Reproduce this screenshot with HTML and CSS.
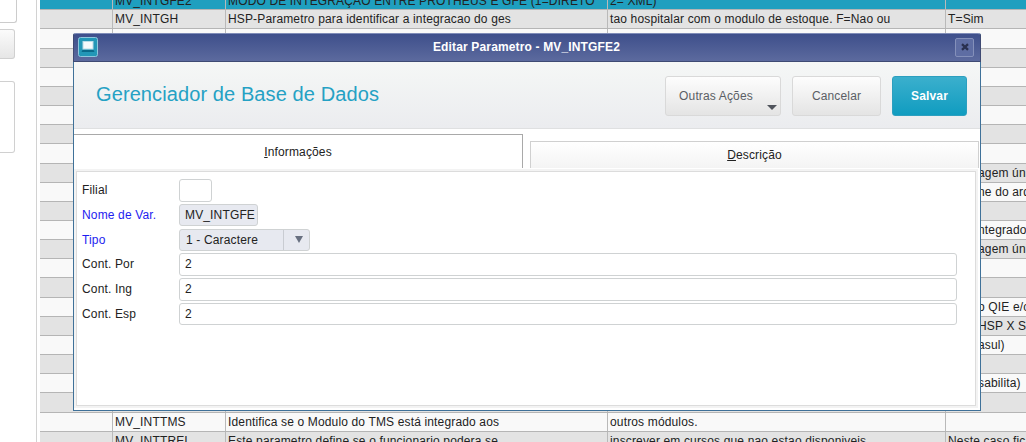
FILE: index.html
```html
<!DOCTYPE html>
<html lang="pt-BR">
<head>
  <meta charset="UTF-8">
  <title>Editar Parametro - MV_INTGFE2</title>
  <link rel="stylesheet" href="styles.css">
</head>
<body>
  <div class="page">
    <aside class="sidebar">
      <div class="side-field"></div>
      <div class="side-button"></div>
      <div class="side-box"></div>
    </aside>

    <div class="lista">
      <div class="row selected"><span></span><span>MV_INTGFE2</span><span>MODO DE INTEGRAÇÃO ENTRE PROTHEUS E GFE (1=DIRETO</span><span>2= XML)</span><span></span></div>
      <div class="row"><span></span><span>MV_INTGH</span><span>HSP-Parametro para identificar a integracao do ges</span><span>tao hospitalar com o modulo de estoque. F=Nao ou</span><span>T=Sim</span></div>
      <div class="row"><span></span><span></span><span></span><span></span><span></span></div>
      <div class="row"><span></span><span></span><span></span><span></span><span></span></div>
      <div class="row"><span></span><span></span><span></span><span></span><span></span></div>
      <div class="row"><span></span><span></span><span></span><span></span><span></span></div>
      <div class="row"><span></span><span></span><span></span><span></span><span></span></div>
      <div class="row"><span></span><span></span><span></span><span></span><span></span></div>
      <div class="row"><span></span><span></span><span></span><span></span><span></span></div>
      <div class="row"><span></span><span></span><span></span><span></span><span class="rest">agem única</span></div>
      <div class="row"><span></span><span></span><span></span><span></span><span class="rest">ne do arquivo</span></div>
      <div class="row"><span></span><span></span><span></span><span></span><span></span></div>
      <div class="row"><span></span><span></span><span></span><span></span><span class="rest">ntegrado</span></div>
      <div class="row"><span></span><span></span><span></span><span></span><span class="rest">agem única</span></div>
      <div class="row"><span></span><span></span><span></span><span></span><span></span></div>
      <div class="row"><span></span><span></span><span></span><span></span><span></span></div>
      <div class="row"><span></span><span></span><span></span><span></span><span class="rest">o QIE e/ou</span></div>
      <div class="row"><span></span><span></span><span></span><span></span><span class="rest">HSP X SI</span></div>
      <div class="row"><span></span><span></span><span></span><span></span><span class="rest">asul)</span></div>
      <div class="row"><span></span><span></span><span></span><span></span><span></span></div>
      <div class="row"><span></span><span></span><span></span><span></span><span class="rest">sabilita)</span></div>
      <div class="row"><span></span><span></span><span></span><span></span><span></span></div>
      <div class="row"><span></span><span>MV_INTTMS</span><span>Identifica se o Modulo do TMS está integrado aos</span><span>outros módulos.</span><span></span></div>
      <div class="row"><span></span><span>MV_INTTREI</span><span>Este parametro define se o funcionario podera se</span><span>inscrever em cursos que nao estao disponiveis.</span><span>Neste caso fica</span></div>
    </div>
  </div>

  <div class="dialog">
    <div class="titlebar">
      <svg class="app-icon" width="20" height="20" viewBox="0 0 20 20">
        <rect x="0.5" y="0.5" width="19" height="19" rx="2" fill="#2397b7" stroke="#8fc6dc"/>
        <rect x="5" y="4.5" width="10" height="7.5" fill="#f5fafc" stroke="#b9dce8"/>
        <path d="M4.5 13h11l1 2h-13z" fill="#0b6a8a"/>
      </svg>
      <span class="title">Editar Parametro - MV_INTGFE2</span>
      <button class="close">
        <svg width="8" height="8" viewBox="0 0 8 8"><path d="M1 1.2L7 6.8M7 1.2L1 6.8" stroke="#2a3150" stroke-width="2.3"/></svg>
      </button>
    </div>

    <div class="header">
      <h1>Gerenciador de Base de Dados</h1>
      <button class="btn outras">Outras Ações<i class="seta"></i></button>
      <button class="btn cancelar">Cancelar</button>
      <button class="btn salvar">Salvar</button>
    </div>

    <div class="tabs">
      <div class="tab active"><u>I</u>nformações</div>
      <div class="tab"><u>D</u>escrição</div>
    </div>

    <div class="painel">
      <div class="campo"><label>Filial</label><div class="input filial"></div></div>
      <div class="campo"><label class="obrig">Nome de Var.</label><div class="input nome">MV_INTGFE</div></div>
      <div class="campo"><label class="obrig">Tipo</label><div class="input tipo"><span>1 - Caractere</span><b><i></i></b></div></div>
      <div class="campo"><label>Cont. Por</label><div class="input">2</div></div>
      <div class="campo"><label>Cont. Ing</label><div class="input">2</div></div>
      <div class="campo"><label>Cont. Esp</label><div class="input">2</div></div>
    </div>
  </div>
</body>
</html>
```
FILE: styles.css
```css
* { box-sizing: border-box; }
body { margin: 0; height: 442px; overflow: hidden; background: #fff; color: #222; font: 12px "Liberation Sans", Arial, sans-serif; letter-spacing: 0.15px; }
button { font: inherit; letter-spacing: inherit; padding: 0; }

.page { display: flex; height: 442px; overflow: hidden; }

.sidebar { width: 37px; flex: none; border-right: 1px solid #d2d2d2; margin-right: 3px; }
.side-field { width: 17px; height: 23px; border: 1px solid #ccc; border-width: 0 1px 1px 0; border-radius: 0 0 3px 0; }
.side-button { width: 15px; height: 30px; margin-top: 6px; border: 1px solid #d0d0d0; border-left: 0; border-radius: 0 3px 3px 0; background: linear-gradient(#fbfbfb, #e6e6e6); }
.side-box { width: 15px; height: 72px; margin-top: 22px; border: 1px solid #d0d0d0; border-left: 0; border-radius: 0 3px 3px 0; }

.lista { flex: 1; margin-top: -8.9px; overflow: hidden; }
.row { display: grid; grid-template-columns: 72px 113px 382px 338px 81px; height: 19.16px; line-height: 18px; background: #f9f9f9; border-bottom: 1px solid #b5b5b5; white-space: nowrap; }
.row:nth-child(even) { background: #e3e3e3; }
.row.selected { background: #1f9fbf; line-height: 20px; }
.row span { padding-left: 2px; overflow: hidden; }
.row span + span { border-left: 1px solid #b9b9b9; }
.row .rest { padding-left: 32px; }

.dialog { position: absolute; left: 73px; top: 33px; width: 908px; height: 378px; display: flex; flex-direction: column; background: #fff; border: 1px solid #3f7199; border-top: 0; border-radius: 3px 3px 0 0; }

.titlebar { display: flex; align-items: center; height: 29px; margin: 0 -1px; padding: 0 6px 1px 4px; background: linear-gradient(#3e4f8b, #5c6a9e); border: 1px solid #3f4a73; border-top-color: #7f8cb8; border-radius: 3px 3px 0 0; color: #fff; font-weight: bold; }
.title { flex: 1; text-align: center; }
.close { display: flex; align-items: center; justify-content: center; width: 19px; height: 19px; background: #5e6da3; border: 1px solid #8490ba; border-radius: 2px; }

.header { display: flex; align-items: center; height: 67px; padding: 2px 13px 0 22px; background: linear-gradient(#f5f7f6, #ebecef); border-bottom: 1px solid #dfe0e1; }
h1 { flex: 1; margin: 0; padding-bottom: 4px; color: #25a1c4; font-size: 20px; font-weight: normal; letter-spacing: 0.1px; }
.btn { position: relative; height: 40px; border: 1px solid #d9d9d9; border-radius: 3px; background: linear-gradient(#fdfdfd, #e4e4e4); color: #5b5e65; }
.outras { width: 116px; padding-right: 14px; margin-right: 11px; }
.cancelar { width: 89px; margin-right: 11px; }
.salvar { width: 75px; border-color: #2c9fbf; background: linear-gradient(#3bafcd, #109cc0); color: #fff; font-weight: bold; }
.seta { position: absolute; right: 3px; bottom: 5px; border: 5px solid transparent; border-top-color: #50545c; border-bottom: 0; }

.tabs { display: flex; align-items: flex-end; gap: 7px; height: 39px; padding-top: 5px; }
.tab { width: 449px; height: 27px; text-align: center; line-height: 26px; color: #222; background: linear-gradient(#fff, #f4f4f4); border: 1px solid #d0d0d0; border-width: 1px 1px 0; }
.tab.active { height: 34px; line-height: 35px; background: #fff; border: solid #a9a9a9; border-width: 1px 1px 0 0; }

.painel { flex: 1; margin: 3px 4px 4px 2px; padding: 7px 18px 0 5px; border: 1px solid #dcdcdc; box-shadow: 0 0 0 2px #f3f3f3; }
.campo { display: flex; height: 24.8px; }
label { width: 97px; line-height: 22px; }
.obrig { color: #1d1df0; }
.input { flex: 1; height: 22.5px; padding-left: 5px; line-height: 21px; border: 1px solid #cfd2d3; border-radius: 3px; background: #fff; }
.filial { flex: none; width: 33px; }
.nome { flex: none; width: 79px; background: #e7e9f0; white-space: nowrap; }
.tipo { flex: none; display: flex; width: 131px; background: #e7e9f0; }
.tipo span { flex: 1; padding-left: 1px; }
.tipo b { display: flex; align-items: center; justify-content: center; width: 26px; padding-left: 4px; border-left: 1px solid #c9ccd2; }
.tipo i { border: 4.5px solid transparent; border-top: 7px solid #687080; border-bottom: 0; }
```
